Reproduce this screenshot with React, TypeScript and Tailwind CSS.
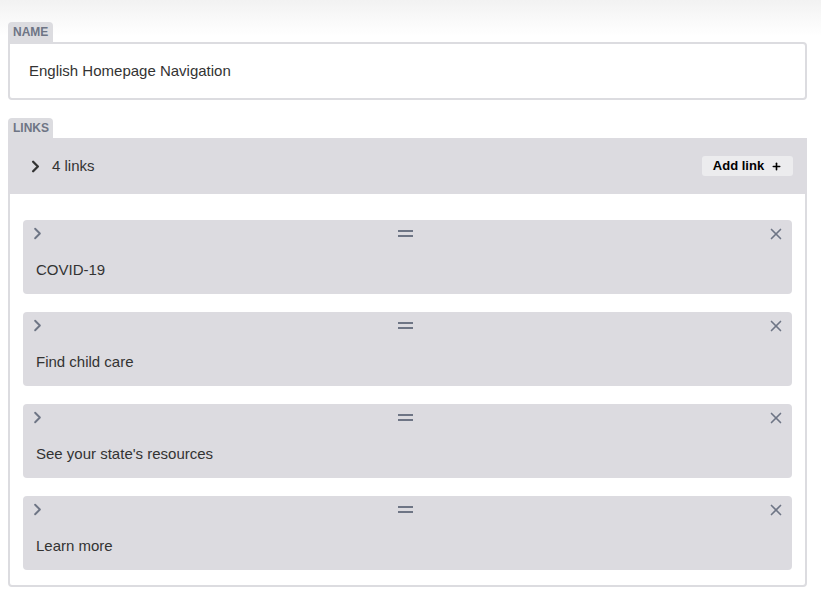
import { ChevronRight, X, Plus } from 'lucide-react';

const links = ['COVID-19', 'Find child care', "See your state's resources", 'Learn more'];

function Tab({ label }: { label: string }) {
    return (
        <div className="w-[45px] h-[20px] pl-[5px] rounded-t-[4px] bg-[#dcdce0] text-[12px] leading-[21px] font-bold text-[#6e7585]">
            {label}
        </div>
    );
}

function LinkItem({ title }: { title: string }) {
    return (
        <div className="h-[74px] rounded-[4px] bg-[#dcdbe0] flex flex-col">
            <div className="h-[27px] flex items-center justify-between pl-[5px] pr-[7px]">
                <ChevronRight className="w-[19px] h-[19px] text-[#6e7585]" strokeWidth={2.4} />
                <div className="flex flex-col gap-[3px] -ml-[4px]">
                    <div className="w-[15px] h-[2px] bg-[#6e7585]" />
                    <div className="w-[15px] h-[2px] bg-[#6e7585]" />
                </div>
                <X className="w-[18px] h-[18px] text-[#6e7585]" strokeWidth={2.2} />
            </div>
            <div className="flex-1 flex items-center pl-[13px] text-[15px] text-[#333]">{title}</div>
        </div>
    );
}

export default function App() {
    return (
        <div className="min-h-[597px] bg-[linear-gradient(to_bottom,#f2f2f2,#ffffff_36px)] pt-[22px] px-[8px] pb-[8px] font-['Liberation_Sans',Arial,sans-serif]">
            <div className="w-[799px]">
                <Tab label="NAME" />
                <div className="h-[58px] border-2 border-[#dcdce0] rounded-b-[4px] rounded-tr-[4px] bg-white flex items-center pl-[19px] text-[15px] text-[#333]">
                    English Homepage Navigation
                </div>

                <div className="mt-[18px]">
                    <Tab label="LINKS" />
                    <div className="border-2 border-[#dcdce0] rounded-b-[4px] rounded-tr-[4px] bg-white">
                        <div className="-mt-[2px] -mx-[2px] h-[56px] bg-[#dcdbe0] flex items-center justify-between pl-[18px] pr-[14px]">
                            <div className="flex items-center gap-[7px] text-[15px] text-[#333]">
                                <ChevronRight className="w-[19px] h-[19px] text-[#333]" strokeWidth={3} />
                                4 links
                            </div>
                            <button className="h-[20px] w-[91px] rounded-[3px] bg-[#ececee] flex items-center justify-center gap-[7px] text-[13px] font-bold text-black">
                                Add link
                                <Plus className="w-[11px] h-[11px]" strokeWidth={3.5} />
                            </button>
                        </div>
                        <div className="pt-[26px] pb-[15px] px-[13px] flex flex-col gap-[18px]">
                            {links.map((l) => (
                                <LinkItem key={l} title={l} />
                            ))}
                        </div>
                    </div>
                </div>
            </div>
        </div>
    );
}
